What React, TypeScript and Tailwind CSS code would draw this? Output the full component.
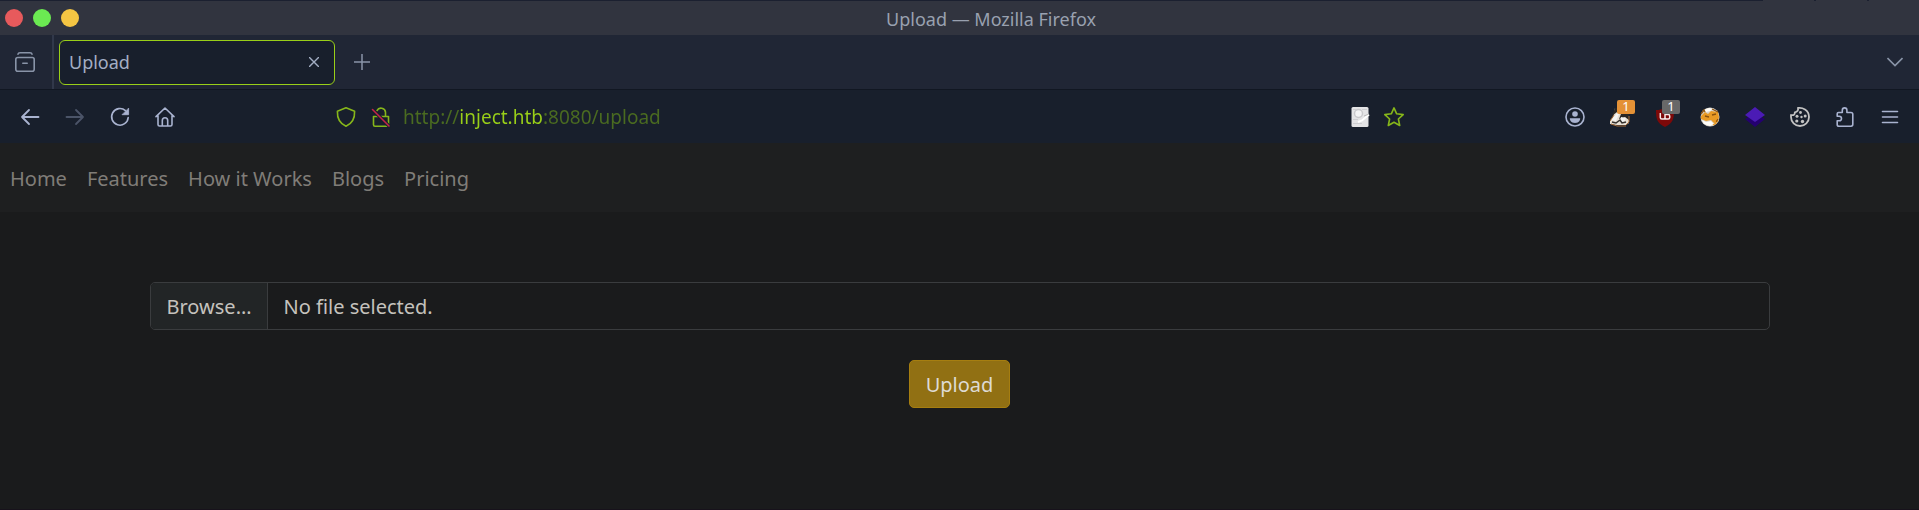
import React, { useState } from "react";

type IconProps = { children: React.ReactNode; className?: string };

function Icon({ children, className = "" }: IconProps) {
  return (
    <svg
      viewBox="0 0 20 20"
      fill="none"
      stroke="currentColor"
      strokeWidth="1.6"
      strokeLinecap="round"
      strokeLinejoin="round"
      aria-hidden="true"
      className={`size-5 shrink-0 overflow-visible ${className}`}
    >
      {children}
    </svg>
  );
}

type ToolButtonProps = { label: string; children: React.ReactNode; className?: string; badge?: string; badgeClass?: string };

function ToolButton({ label, children, className = "", badge, badgeClass = "" }: ToolButtonProps) {
  return (
    <button
      type="button"
      aria-label={label}
      className={`relative flex h-10 w-[45px] shrink-0 items-center justify-center ${className}`}
    >
      {children}
      {badge && (
        <span
          className={`absolute top-[3px] right-[7px] flex h-[14px] w-[18px] items-center justify-center rounded-xs text-[13px] leading-none text-white ${badgeClass}`}
        >
          {badge}
        </span>
      )}
    </button>
  );
}

function TitleBar() {
  return (
    <header className="bg-[#31343f]">
      <div className="flex h-px">
        <span className="flex-1 bg-[#1b2030]" />
        <span className="w-[51px]" />
        <span className="w-0.5 bg-[#1b2030]" />
        <span className="w-[51px]" />
        <span className="w-0.5 bg-[#1b2030]" />
        <span className="w-[50px]" />
      </div>
      <div className="flex h-[34px] items-center pr-4 pl-[5px]">
        <div className="flex gap-[10px]">
          <button type="button" aria-label="Close window" className="size-[18px] rounded-full bg-[#e75a5c]" />
          <button type="button" aria-label="Maximize window" className="size-[18px] rounded-full bg-[#6bea52]" />
          <button type="button" aria-label="Minimize window" className="size-[18px] rounded-full bg-[#f4c543]" />
        </div>
        <div className="flex-1 pt-0.5 text-center text-[18px] leading-6 text-[#99a1b0]">Upload — Mozilla Firefox</div>
      </div>
    </header>
  );
}

function TabStrip() {
  return (
    <div className="flex h-[55px] items-center border-b border-[#111722] bg-[#202635] text-[#8994a8]">
      <button
        type="button"
        aria-label="Firefox View"
        className="flex h-full w-[54px] items-center justify-center border-r-2 border-[#31384a] pr-0.5"
      >
        <Icon>
          <rect x="0.8" y="5.5" width="18.4" height="13.700" rx="2" />
          <path d="M3 2.200C3.200 1 4 .8 5 .8h10c1 0 1.800.2 2 1.400M7.800 11.200h4.400" />
        </Icon>
      </button>
      <div className="ml-[5px] flex h-[45px] w-[276px] items-center justify-between rounded-md border border-[#99cf18] bg-[#181f2c] pr-2 pl-[9px]">
        <span className="text-[18px] text-[#a3aec4]">Upload</span>
        <button type="button" aria-label="Close tab" className="flex size-6 items-center justify-center text-[#a3aec4]">
          <svg viewBox="0 0 10 10" className="size-[10px]" stroke="currentColor" strokeWidth="1.4" aria-hidden="true">
            <path d="M0 0 10 10M10 0 0 10" />
          </svg>
        </button>
      </div>
      <button type="button" aria-label="New tab" className="ml-[7px] flex size-10 items-center justify-center">
        <svg viewBox="0 0 16 16" className="size-4" stroke="currentColor" strokeWidth="1.5" aria-hidden="true">
          <path d="M8 0v16M0 8h16" />
        </svg>
      </button>
      <button type="button" aria-label="List all tabs" className="mr-1 ml-auto flex size-10 items-center justify-center">
        <svg viewBox="0 0 16 10" className="h-[10px] w-4" fill="none" stroke="currentColor" strokeWidth="1.6" aria-hidden="true">
          <path d="M.5 1 8 8.500 15.500 1" />
        </svg>
      </button>
    </div>
  );
}

function AddressBar() {
  const [url, setUrl] = useState("http://inject.htb:8080/upload");
  return (
    <div className="mr-[141px] ml-[141px] flex flex-1 items-center text-[#86b61a]">
      <button type="button" aria-label="Tracking protection" className="flex h-10 w-[35px] items-center justify-center">
        <Icon>
          <path d="M10 .8 18.600 4.200C18.900 11 16 16.500 10 19.300 4 16.500 1.100 11 1.400 4.200Z" />
        </Icon>
      </button>
      <button type="button" aria-label="Connection is not secure" className="flex h-10 w-[35px] items-center justify-center">
        <Icon>
          <path d="M2.500 9.500h15v8.200q0 1.500-1.500 1.500H4q-1.500 0-1.500-1.500ZM14.500 9V5.200a4.500 4.500 0 0 0-8.500-1.500" />
          <path d="M2.500 3.500 18 19" stroke="#181f2c" strokeWidth="3.500" />
          <path d="M1.500 2.500 18 19" stroke="#c3244a" strokeWidth="1.600" />
        </Icon>
      </button>
      <input
        type="text"
        aria-label="Address"
        value={url}
        onChange={(e) => setUrl(e.target.value)}
        className="ml-[5px] h-10 min-w-0 flex-1 bg-[linear-gradient(to_right,#4a6b20_56px,#99cf18_56px,#99cf18_140px,#4a6b20_140px)] bg-clip-text text-[19px] text-transparent caret-[#99cf18] outline-none"
      />
      <button type="button" aria-label="Reader page" className="flex h-10 w-[34px] items-center justify-center">
        <svg viewBox="0 0 20 20" className="size-5" aria-hidden="true">
          <rect x="1.500" y="0" width="17" height="20" rx="1.500" fill="#e4e4e6" />
          <circle cx="8.500" cy="6.500" r="4" fill="#f4f4f5" stroke="#c9c9cc" strokeWidth="1.500" />
          <path d="M3 2.500h3M12 2.500h5M3 12.500h5M3 16.500h9" stroke="#cfcfd2" strokeWidth="1.200" />
          <path d="m8 15 4-1.500 7-6" fill="none" stroke="#fff" strokeWidth="2" />
          <path d="m14 9 5-2" stroke="#aaa" strokeWidth=".8" />
        </svg>
      </button>
      <button type="button" aria-label="Bookmark this page" className="flex h-10 w-[34px] items-center justify-center">
        <Icon>
          <path d="m10 .9 2.700 5.900 6.500.8-4.800 4.400 1.300 6.500-5.700-3.200-5.700 3.200L5.600 12 .8 7.600l6.500-.8Z" />
        </Icon>
      </button>
    </div>
  );
}

function Toolbar() {
  return (
    <div className="flex h-[53px] items-center bg-[#181f2c] pr-[7px] pl-[7px] text-[#a9b3d0]">
      <ToolButton label="Back">
        <Icon>
          <path d="M18.500 10H2M9 3 2 10l7 7" strokeWidth="1.800" />
        </Icon>
      </ToolButton>
      <ToolButton label="Forward" className="text-[#4b5468]">
        <Icon>
          <path d="M1.500 10H18M11 3l7 7-7 7" strokeWidth="1.800" />
        </Icon>
      </ToolButton>
      <ToolButton label="Reload">
        <Icon>
          <path d="M18.200 10.500A8.300 8.300 0 1 1 15.500 3.700" />
          <path d="M18.600 1.500v6.200h-6.200Z" fill="currentColor" strokeWidth=".8" />
        </Icon>
      </ToolButton>
      <ToolButton label="Home">
        <Icon>
          <path d="M1 9.700 10 1l9 8.700M3 8.500v9q0 1.500 1.500 1.500h11q1.500 0 1.500-1.500v-9M7.300 19v-5.500a2.700 2.700 0 0 1 5.400 0V19" />
        </Icon>
      </ToolButton>
      <AddressBar />
      <ToolButton label="Account">
        <Icon>
          <circle cx="10" cy="10" r="9" />
          <circle cx="10" cy="7" r="2.800" fill="currentColor" stroke="none" />
          <path d="M4.800 11.300h10.400c0 3-2.200 4.700-5.200 4.700s-5.200-1.700-5.200-4.700Z" fill="currentColor" stroke="none" />
        </Icon>
      </ToolButton>
      <ToolButton label="Privacy Badger" badge="1" badgeClass="bg-[#e49136]">
        <svg viewBox="0 0 20 20" className="size-5" aria-hidden="true">
          <path d="M5 1h10l4 8v7l-3 2H7l-7-1v-3l3-4Z" fill="#e8dfd3" />
          <path d="m5 1-3 8 5-4 4 2-2 5 6-2 4 3V7l-5-6Z" fill="#282624" />
          <path d="m1 13 6-7 2 1-3 7ZM11 10l5 1-2 4-4-1Z" fill="#f5f5f3" />
          <path d="m1 17 6 2h9M4 8l-4 6M19 9v6l-3 3" stroke="#a66c38" fill="none" />
          <path d="m2 15 4 1 4-3 2 3 4-1" stroke="#35312e" strokeWidth="1.500" fill="none" />
        </svg>
      </ToolButton>
      <ToolButton label="uBlock Origin" badge="1" badgeClass="bg-[#686868]">
        <svg viewBox="0 0 20 20" className="size-5" aria-hidden="true">
          <path d="M10 .5c3 2 5.500 2.500 9 2.500 0 9-1 13-9 17C2 16 1 12 1 3c3.500 0 6-.5 9-2.500Z" fill="#7d0909" />
          <path d="M5.300 6v4.500q0 1.500 1.500 1.500h1.700q1.500 0 1.500-1.500V6M10 10.500q0 1.500 1.500 1.500h1.700q1.500 0 1.500-1.500V9q0-1.500-1.500-1.500H10" fill="none" stroke="#f3e9e9" strokeWidth="1.500" />
        </svg>
      </ToolButton>
      <ToolButton label="FoxyProxy">
        <svg viewBox="0 0 20 20" className="size-5" aria-hidden="true">
          <circle cx="10" cy="10" r="9.500" fill="#d9d4cc" />
          <path d="m4 3 5-2 4 1-3 2-4 1Z" fill="#fffdf8" />
          <path d="m1 9 4-4 3 2 3-3 7 1 1 5-1 5-4 1-3-3-5 1-5-2Z" fill="#e99a24" />
          <path d="m1 7 3-4 1 2M12 2l6 3M5 9l4 1M12 8l4-1M16 15l2-3" stroke="#8a5210" strokeWidth="1.300" fill="none" />
          <path d="m2 13 4 2 5-1 3 3-4 2-6-2Z" fill="#fffdf8" />
          <path d="m13 12 3 4-3 2" stroke="#e99a24" strokeWidth="1.500" fill="none" />
        </svg>
      </ToolButton>
      <ToolButton label="Wappalyzer">
        <svg viewBox="0 0 20 20" className="size-5" aria-hidden="true">
          <path d="m0 12 10-6 10 6-10 8Z" fill="#240070" />
          <path d="M10 0 20 8l-10 7L0 8Z" fill="#4b1bb5" />
        </svg>
      </ToolButton>
      <ToolButton label="Cookie editor" className="text-[#c2c2c2]">
        <Icon>
          <path d="M8 1C12 .4 19 2.500 19 10a9 9 0 0 1-18 0V8c3 .8 4-1 3.800-2.700C7.500 5 8.500 3.200 8 1Z" strokeWidth="1.800" />
          <g fill="currentColor" stroke="none">
            <circle cx="10.500" cy="5.500" r="1.400" />
            <circle cx="7" cy="9.200" r="1.500" />
            <circle cx="11.500" cy="10" r="1.200" />
            <circle cx="15.200" cy="9" r="1.500" />
            <circle cx="6.800" cy="14" r="1.600" />
            <circle cx="12.500" cy="14.500" r="1.700" />
          </g>
        </Icon>
      </ToolButton>
      <ToolButton label="Extensions">
        <Icon>
          <path d="M2.200 6.800q0-1.300 1.300-1.300h3.800V3.200a2.300 2.300 0 0 1 4.600 0v2.300H16q1.800 0 1.800 1.800v10q0 1.900-1.800 1.900H4q-1.800 0-1.800-1.800v-3.600h2a2.300 2.300 0 0 0 0-4.600h-2Z" />
        </Icon>
      </ToolButton>
      <ToolButton label="Menu">
        <Icon>
          <path d="M2.500 4.500h15M2.500 10h15M2.500 15.500h15" />
        </Icon>
      </ToolButton>
    </div>
  );
}

const links = ["Home", "Features", "How it Works", "Blogs", "Pricing"];

export default function App() {
  const [fileName, setFileName] = useState("No file selected.");
  return (
    <div className="flex min-h-screen flex-col border-b border-[#17121b] bg-[#1a1b1c] font-['Noto_Sans',sans-serif]">
      <TitleBar />
      <TabStrip />
      <Toolbar />
      <nav className="flex h-[69px] items-center gap-5 bg-[#1e1f20] px-[10px] pt-0.5 text-[20px] text-[#807d78]">
        {links.map((link) => (
          <a key={link} href="#">
            {link}
          </a>
        ))}
      </nav>
      <main className="flex-1 px-[15px] py-[70px]">
        <form className="mx-auto flex max-w-[1620px] flex-col items-center gap-[30px]" onSubmit={(e) => e.preventDefault()}>
          <div className="relative w-full">
            <input
              id="file"
              type="file"
              className="peer sr-only"
              onChange={(e) => setFileName(e.target.files?.[0]?.name ?? "No file selected.")}
            />
            <label
              htmlFor="file"
              className="flex h-12 w-full overflow-hidden rounded-[5px] border border-[#3a3c3e] text-[20px] text-[#c5c2bd] peer-focus-visible:border-[#9a7514]"
            >
              <span className="flex items-center border-r border-[#3a3c3e] bg-[#222526] px-4 pt-0.5">Browse…</span>
              <span className="flex items-center px-[15px] pt-0.5">{fileName}</span>
            </label>
          </div>
          <button
            type="submit"
            className="h-12 rounded-[5px] border border-[#a67e10] bg-[#917013] px-4 pt-0.5 text-[20px] text-[#dedbd4]"
          >
            Upload
          </button>
        </form>
      </main>
    </div>
  );
}
